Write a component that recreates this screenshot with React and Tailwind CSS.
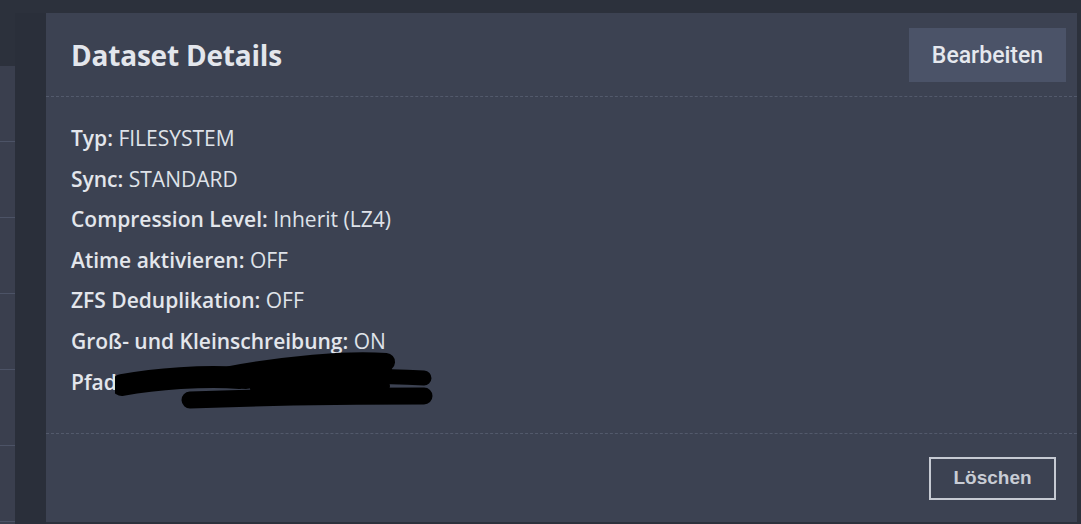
export default function App() {
  const rows = [
    ["Typ:", "FILESYSTEM"],
    ["Sync:", "STANDARD"],
    ["Compression Level:", "Inherit (LZ4)"],
    ["Atime aktivieren:", "OFF"],
    ["ZFS Deduplikation:", "OFF"],
    ["Groß- und Kleinschreibung:", "ON"],
  ];

  return (
    <div className="w-[1081px] h-[524px] bg-[#2c313c] overflow-hidden flex pt-[13px] font-['Open_Sans',sans-serif] text-[#e3e6ec]">
      {/* background list column */}
      <div className="w-[15px] mt-[53px] flex flex-col bg-[#3a3f4e]">
        {[0, 1, 2, 3, 4, 5].map((i) => (
          <div key={i} className="h-[76px] border-b border-[#4c5366]" />
        ))}
      </div>
      <div className="w-[31px] bg-[#2a2f3a]" />

      {/* modal */}
      <div className="w-[1031px] h-[509px] bg-[#3c4252] flex flex-col">
        <div className="h-[84px] flex items-center justify-between pl-[25px] pr-[11px] border-b border-dashed border-[#535a6c]">
          <h2 className="text-[28px] font-bold tracking-[-0.2px]">Dataset Details</h2>
          <button className="w-[157px] h-[54px] pt-[3px] bg-[#4b5368] font-['Roboto',sans-serif] text-[23px] font-medium text-[#e5e8ee]">
            Bearbeiten
          </button>
        </div>

        <div className="flex-1 flex flex-col pl-[25px] pt-[21px] text-[21px]">
          {rows.map(([label, value]) => (
            <div key={label} className="leading-[40.6px]">
              <span className="font-semibold">{label}</span>{" "}
              <span className="text-[#dfe2e9]">{value}</span>
            </div>
          ))}
          <div className="relative leading-[40.6px]">
            <span className="font-semibold">Pfad:</span>
            <svg
              className="absolute left-[44px] top-[-13px]"
              width="330"
              height="70"
              viewBox="0 0 330 70"
            >
              <g stroke="#000" strokeLinecap="round" fill="none">
                <path d="M7 36 C40 30 90 26 125 29" strokeWidth="22" />
                <path d="M115 26 C170 16 230 10 271 13" strokeWidth="18" />
                <path d="M130 32 C180 26 230 22 270 24" strokeWidth="16" />
                <path d="M215 28 C250 27 285 28 309 29" strokeWidth="15" />
                <path d="M145 39 C190 36 225 36 265 37" strokeWidth="20" />
                <path d="M75 51 C150 48 240 47 309 47" strokeWidth="17" />
              </g>
            </svg>
          </div>
        </div>

        <div className="h-[89px] border-t border-dashed border-[#535a6c] flex items-center justify-end pr-[21px]">
          <button className="w-[127px] h-[43px] border-2 border-[#c6cad3] font-['Liberation_Sans',sans-serif] font-bold text-[19px] text-[#c8ccd5]">
            Löschen
          </button>
        </div>
      </div>
      <div className="flex-1 bg-[#2c313c]" />
    </div>
  );
}
